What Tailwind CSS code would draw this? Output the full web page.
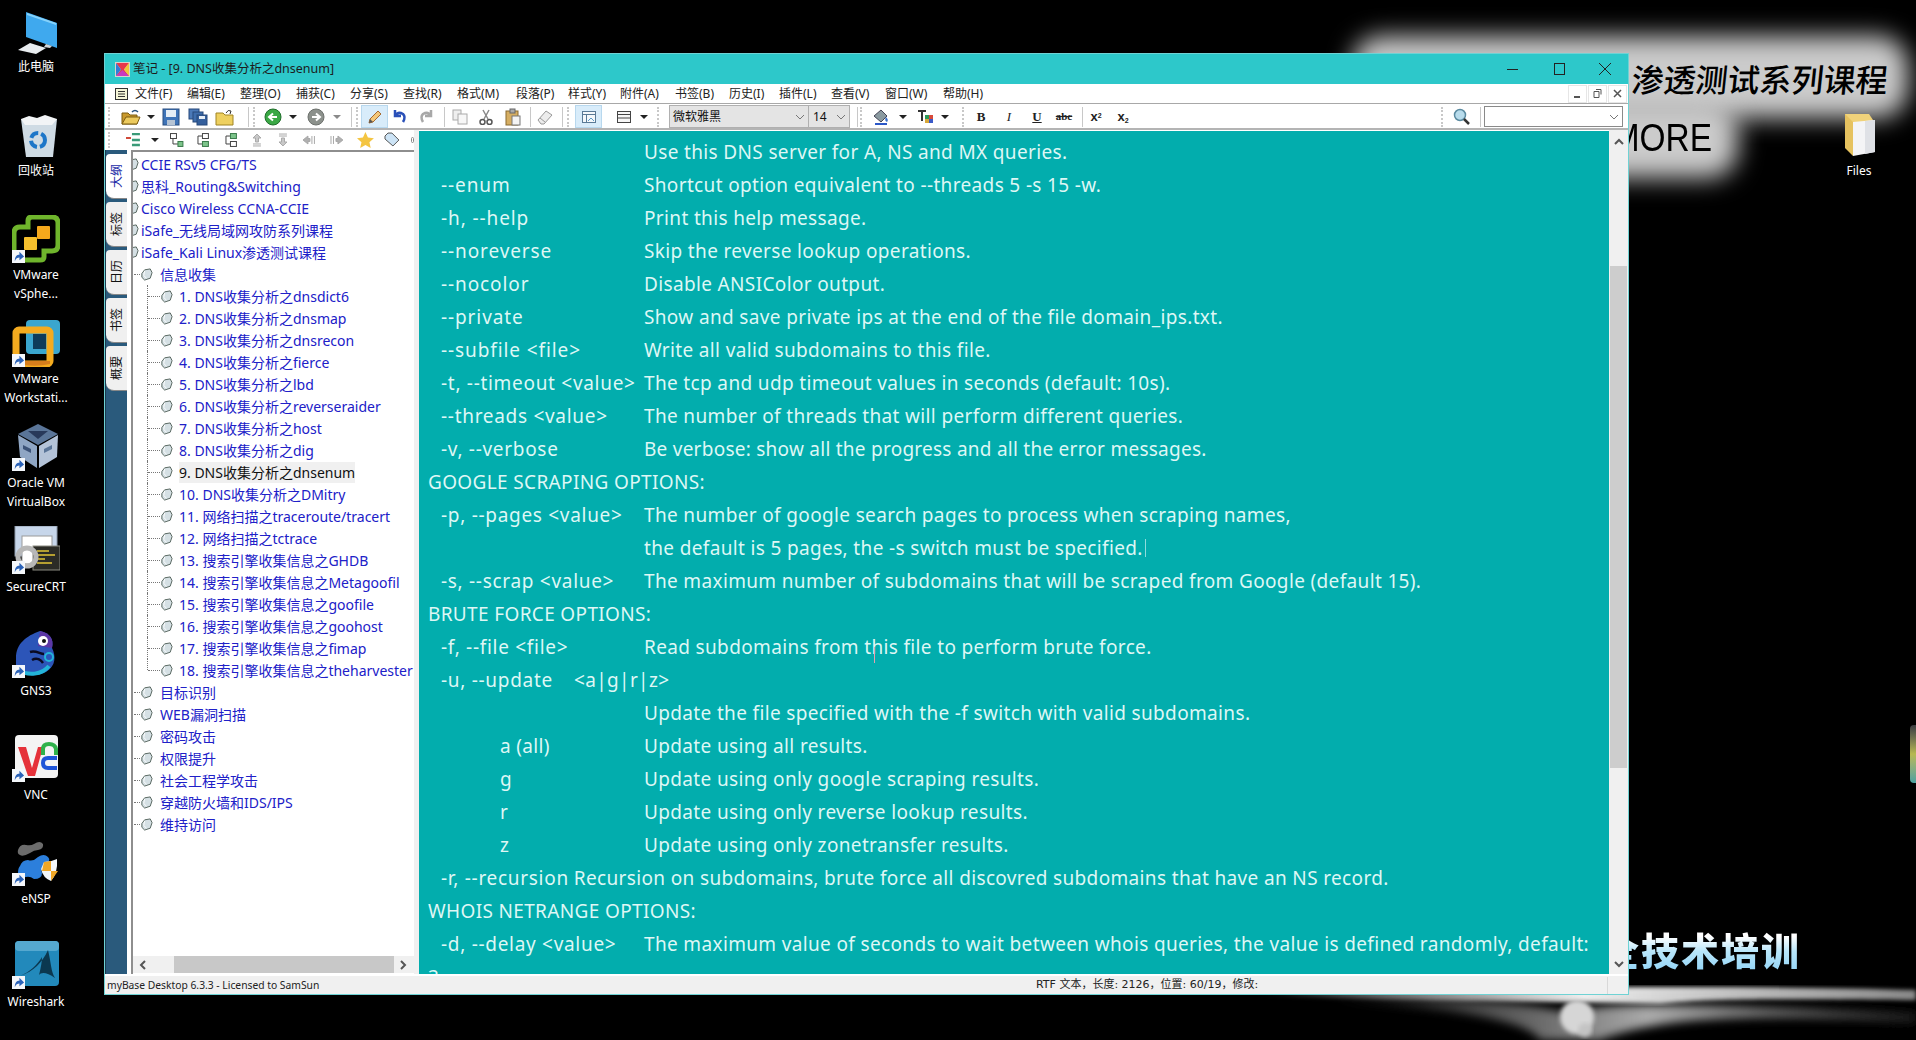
<!DOCTYPE html>
<html lang="zh-CN">
<head>
<meta charset="UTF-8">
<title>笔记 - [9. DNS收集分析之dnsenum]</title>
<script src="https://cdn.jsdelivr.net/npm/@tailwindcss/browser@4"></script>
</head>
<body class="bg-black overflow-hidden font-['Noto_Sans','Noto_Sans_CJK_SC',sans-serif]">
<svg class="hidden">
  <symbol id="node" viewBox="0 0 14 14"><path d="M2 6 5 2l6-1 2 4-2 6-6 2-3-3Z" fill="#d5e0e4" stroke="#4f5f58"/><path d="M5 3 4 8l3 3" fill="none" stroke="#fff"/></symbol>
  <symbol id="sc" viewBox="0 0 14 14"><rect width="14" height="14" fill="#f4f7fb"/><path d="M3 12c0-5 2-7 5-7V2l5 5-5 4V8c-2 0-4 1-5 4Z" fill="#2a62b8"/></symbol>
  <symbol id="caret" viewBox="0 0 8 8"><path d="M0 2h8L4 6Z" fill="#222"/></symbol>
  <symbol id="caretg" viewBox="0 0 8 8"><path d="M0 2h8L4 6Z" fill="#8a8a8a"/></symbol>
  <symbol id="chev" viewBox="0 0 10 10"><path d="m1 3 4 4 4-4" fill="none" stroke="#777"/></symbol>
</svg>

<!-- desktop background -->
<div class="absolute left-[1352px] top-[36px] w-[556px] h-[82px] bg-[#cbcbcb] rounded-[30px] blur-[12px]"></div>
<div class="absolute left-[1560px] top-[100px] w-[178px] h-[78px] bg-[#cbcbcb] rounded-[30px] blur-[12px]"></div>
<div class="absolute right-[28px] top-[56px] flex gap-[1px] text-[32px] leading-[44px] text-black font-['Noto_Sans_CJK_SC',sans-serif] font-medium -skew-x-6">渗透测试系列课程</div>
<div class="absolute left-[1598px] top-[112px] text-[38px] leading-[52px] text-black font-['Liberation_Sans',sans-serif] origin-right scale-x-[.88]">MORE</div>
<div class="absolute left-[1601px] top-[924px] text-[38px] leading-[50px] font-black whitespace-nowrap font-['Noto_Sans_CJK_SC',sans-serif] tracking-[2px] bg-linear-to-b from-white from-25% via-[#b8e6fa] via-55% to-[#8ed2f6] bg-clip-text text-transparent">全技术培训</div>
<svg class="absolute left-[1100px] top-[970px]" width="816" height="70" viewBox="0 0 816 70">
  <defs>
    <filter id="b6"><feGaussianBlur stdDeviation="5"/></filter>
    <filter id="b2"><feGaussianBlur stdDeviation="2"/></filter>
    <linearGradient id="st" x1="0" x2="1"><stop offset="0" stop-color="#fff" stop-opacity="0"/><stop offset=".5" stop-color="#eee"/><stop offset=".75" stop-color="#bbb"/><stop offset="1" stop-color="#888"/></linearGradient>
    <linearGradient id="sw" x1="0" x2="1"><stop offset="0" stop-color="#888" stop-opacity="0"/><stop offset=".55" stop-color="#aaa"/><stop offset="1" stop-color="#222"/></linearGradient>
  </defs>
  <path d="M150 24C320 18 620 14 816 20v10C620 28 600 30 560 34 420 30 300 32 150 24Z" fill="url(#st)" filter="url(#b2)"/>
  <path d="M220 30C340 26 430 32 470 44 500 30 600 34 816 44v8C660 44 560 46 500 70H440C430 50 340 36 220 30Z" fill="url(#sw)" filter="url(#b6)"/>
  <circle cx="477" cy="47" r="17" fill="#d6d6d6" filter="url(#b2)"/>
  <circle cx="485" cy="60" r="7" fill="#c4c4c4" filter="url(#b2)"/>
</svg>
<div class="absolute left-[1910px] top-[725px] w-[6px] h-[58px] rounded-l-sm bg-linear-to-b from-[#3a3c40] via-[#b8b850] to-[#4aa0a0]"></div>

<!-- desktop icons -->
<div class="absolute left-0 top-[8px] w-[72px] flex flex-col text-white text-[12px] leading-[19px] text-center">
  <div class="h-[103.7px]">
    <svg class="mx-auto" width="48" height="48" viewBox="0 0 48 48"><path d="M14 4 45 15v25L14 29Z" fill="#3fa9ee"/><path d="m15 5 29 10v2L15 7Z" fill="#86d2fa"/><path d="M34 36l6 2-2 2-6-1Z" fill="#cfd4d8"/><path d="M6 42 18 35l16 5-10 6Z" fill="#e8ecef"/></svg>
    <div class="mt-[1px]">此电脑</div>
  </div>
  <div class="h-[103.7px]">
    <svg class="mx-auto" width="48" height="48" viewBox="0 0 48 48"><path d="M9 7h36l-4 38H14Z" fill="#cfdbe4"/><path d="M9 7l8-3 8 2 8-3 12 4-5 6H13Z" fill="#f2f4f6"/><circle cx="26" cy="28" r="7" fill="none" stroke="#1d76c8" stroke-width="4" stroke-dasharray="9 3"/></svg>
    <div class="mt-[1px]">回收站</div>
  </div>
  <div class="h-[103.7px]">
    <div class="relative w-[48px] h-[48px] mx-auto">
      <svg width="48" height="48" viewBox="0 0 48 48"><path d="M16 12V6q0-4 4-4h20q6 0 6 6v22q0 6-6 6h-8v6q0 3-4 3H8q-6 0-6-6V18q0-6 6-6Z" fill="none" stroke="#6fb52c" stroke-width="5"/><rect x="25" y="11" width="13" height="13" rx="1" fill="#f5a81c"/><rect x="12" y="22" width="13" height="13" rx="1" fill="#f7c02d"/></svg>
      <svg class="absolute left-0 bottom-0" width="13" height="13"><use href="#sc"/></svg>
    </div>
    <div class="mt-[2px]">VMware<br>vSphe...</div>
  </div>
  <div class="h-[103.7px]">
    <div class="relative w-[48px] h-[48px] mx-auto">
      <svg width="48" height="48" viewBox="0 0 48 48"><rect x="14" y="1" width="34" height="34" rx="4" fill="#3aa6cf"/><rect x="4" y="11" width="34" height="34" rx="3" fill="none" stroke="#f4ab1f" stroke-width="7"/><rect x="21" y="15" width="13" height="15" fill="#0d3c5a"/><path d="M8 42h30v3q-12 3-26 1Z" fill="#d67e1c"/></svg>
      <svg class="absolute left-0 bottom-0" width="13" height="13"><use href="#sc"/></svg>
    </div>
    <div class="mt-[2px]">VMware<br>Workstati...</div>
  </div>
  <div class="h-[103.7px]">
    <div class="relative w-[48px] h-[48px] mx-auto">
      <svg width="48" height="48" viewBox="0 0 48 48"><path d="M26 1 46 11 26 22 6 11Z" fill="#5a7598"/><path d="M6 12 25 23v22L8 34Z" fill="#8fa6c4"/><path d="m46 12-19 11v22l18-11Z" fill="#b4c3d8"/><path d="M16 8h20l-10 8Z" fill="#28395a"/><path d="M11 22l8 4v4l-8-4Z" fill="#3c5378"/><path d="m32 26 8-4v4l-8 4Z" fill="#5a7598"/></svg>
      <svg class="absolute left-0 bottom-0" width="13" height="13"><use href="#sc"/></svg>
    </div>
    <div class="mt-[2px]">Oracle VM<br>VirtualBox</div>
  </div>
  <div class="h-[103.7px]">
    <div class="relative w-[48px] h-[48px] mx-auto">
      <svg width="48" height="48" viewBox="0 0 48 48"><rect x="3" y="0" width="42" height="30" fill="#c7d6ea" stroke="#8d99aa"/><rect x="10" y="10" width="30" height="28" fill="#fff" stroke="#999"/><rect x="21" y="20" width="27" height="24" fill="#2b2b26" stroke="#8a8a80"/><path d="M25 25h12M25 29h18M25 33h8M25 37h15" stroke="#e4c636" stroke-width="1.5"/><circle cx="15" cy="31" r="9" fill="none" stroke="#b7b7b7" stroke-width="5"/></svg>
      <svg class="absolute left-0 bottom-0" width="13" height="13"><use href="#sc"/></svg>
    </div>
    <div class="mt-[3px]">SecureCRT</div>
  </div>
  <div class="h-[103.7px]">
    <div class="relative w-[48px] h-[48px] mx-auto">
      <svg width="48" height="48" viewBox="0 0 48 48"><path d="M4 28C4 14 14 6 28 1c10 2 14 8 12 17 4 8 4 18-6 24-10 5-22 4-30-3Z" fill="#2c55b8"/><path d="M28 1c10 2 14 8 12 17l-14-2Z" fill="#5d37a5"/><circle cx="31" cy="11" r="5" fill="#fff"/><circle cx="32" cy="11" r="2" fill="#111"/><path d="M6 40c10 6 24 5 31-4" stroke="#23b4d8" stroke-width="4" fill="none"/><path d="M18 22c6-2 10 2 14 2M20 30c5-3 9 0 11 3" stroke="#0a0a22" stroke-width="2.5" fill="none"/><circle cx="37" cy="27" r="4" fill="none" stroke="#23b4d8" stroke-width="2"/></svg>
      <svg class="absolute left-0 bottom-0" width="13" height="13"><use href="#sc"/></svg>
    </div>
    <div class="mt-[3px]">GNS3</div>
  </div>
  <div class="h-[103.7px]">
    <div class="relative w-[48px] h-[48px] mx-auto">
      <svg width="48" height="48" viewBox="0 0 48 48"><rect x="3" y="1" width="43" height="43" rx="4" fill="#f4f4f4"/><path d="M6 13h8l6 21 6-21h5L23 42h-7Z" fill="#e5323a"/><path d="M31 21v-6q0-5 6-5t7 5v6" fill="none" stroke="#2fb14a" stroke-width="4"/><path d="M45 24H36q-5 0-5 5t5 5h9" fill="none" stroke="#1f55d8" stroke-width="4"/></svg>
      <svg class="absolute left-0 bottom-0" width="13" height="13"><use href="#sc"/></svg>
    </div>
    <div class="mt-[3px]">VNC</div>
  </div>
  <div class="h-[103.7px]">
    <div class="relative w-[48px] h-[48px] mx-auto">
      <svg width="48" height="48" viewBox="0 0 48 48"><path d="M6 12q2-6 8-5 5 1 8-1 6-4 9 0 1 5-5 6-4 0-8 3-7 4-10 2-3-1-2-5Z" fill="#6c6c6c"/><path d="M8 28q2-6 8-6 5 2 10-3 6-4 10 0t-4 8q-4 4-2 8 0 6-8 6-4-3-8-2-8 1-8-4t2-7Z" fill="#2c7fdc"/><path d="M32 24q7 0 13-3 1 14-6 22-8-3-10-12Z" fill="#f2f6fa"/><path d="M32 24l7-1v10h-9Zm7 9h7l-7 10Z" fill="#f0a727"/></svg>
      <svg class="absolute left-0 bottom-0" width="13" height="13"><use href="#sc"/></svg>
    </div>
    <div class="mt-[3px]">eNSP</div>
  </div>
  <div class="h-[103.7px]">
    <div class="relative w-[48px] h-[48px] mx-auto">
      <svg width="48" height="48" viewBox="0 0 48 48"><rect x="3" y="0" width="44" height="45" rx="4" fill="#2289bb"/><rect x="3" y="0" width="44" height="10" rx="4" fill="#55a8cf"/><path d="M8 35C22 30 30 22 36 9c3 12 3 22 7 28-8-6-14-6-16-3 2-8 3-14 3-18-5 8-12 15-22 19Z" fill="#0b3850"/></svg>
      <svg class="absolute left-0 bottom-0" width="13" height="13"><use href="#sc"/></svg>
    </div>
    <div class="mt-[3px]">Wireshark</div>
  </div>
</div>
<div class="absolute left-[1827px] top-[112px] w-[64px] text-white text-[12px] leading-[19px] text-center">
  <svg class="mx-auto" width="40" height="48" viewBox="0 0 40 48"><path d="M6 2h24l4 6v32L6 36Z" fill="#f0d27a"/><path d="M6 2v34l8 8V10Z" fill="#e6c25f"/><path d="M14 10l22-2v32l-22 4Z" fill="#f4f4f6"/><path d="M26 9l10-1v32l-10 2Z" fill="#dfe1e6"/></svg>
  <div class="mt-[1px]">Files</div>
</div>

<!-- main window -->
<div class="absolute left-[104px] top-[53px] w-[1525px] h-[942px] flex flex-col bg-[#f0f0f0] border border-[#6fd2d4]">
  <div class="h-[30px] shrink-0 bg-[#2dc8ca] flex items-center text-[12.5px] text-[#1c1c1c]">
    <svg class="ml-[10px]" width="15" height="15" viewBox="0 0 15 15"><rect width="15" height="15" fill="#d8d4cc"/><path d="M1 1h13L9 7.500 14 14H1l5-6.500Z" fill="#e8384a"/><path d="M1 1 6 7.500 1 14Z" fill="#2f7fd8"/><path d="M14 1 9 7.500 14 14Z" fill="#f0c838"/><path d="M1 14h13L7.500 8Z" fill="#c83ac0"/></svg>
    <span class="ml-[3px]">笔记 - [9. DNS收集分析之dnsenum]</span>
    <div class="ml-auto flex items-center">
      <svg class="w-[46px]" width="46" height="12" viewBox="0 0 46 12"><path d="M17 6.500h11" stroke="#222"/></svg>
      <svg class="w-[46px]" width="46" height="12" viewBox="0 0 46 12"><rect x="18.500" y=".5" width="10" height="11" fill="none" stroke="#222"/></svg>
      <svg class="w-[46px]" width="46" height="12" viewBox="0 0 46 12"><path d="m17 0 12 12M29 0 17 12" stroke="#222"/></svg>
    </div>
  </div>

  <div class="h-[20px] shrink-0 bg-white flex items-center text-[12px] text-[#222] border-b border-[#a8a8a8]">
    <svg class="ml-[10px] mr-[7px]" width="13" height="12" viewBox="0 0 13 12"><rect x=".5" y=".5" width="12" height="11" fill="#f6f6d8" stroke="#333"/><path d="M3 3.500h7M3 6h7M3 8.500h7" stroke="#333"/></svg>
    <span class="w-[52px]">文件(F)</span>
    <span class="w-[53px]">编辑(E)</span>
    <span class="w-[56px]">整理(O)</span>
    <span class="w-[54px]">捕获(C)</span>
    <span class="w-[53px]">分享(S)</span>
    <span class="w-[54px]">查找(R)</span>
    <span class="w-[59px]">格式(M)</span>
    <span class="w-[52px]">段落(P)</span>
    <span class="w-[52px]">样式(Y)</span>
    <span class="w-[55px]">附件(A)</span>
    <span class="w-[54px]">书签(B)</span>
    <span class="w-[50px]">历史(I)</span>
    <span class="w-[52px]">插件(L)</span>
    <span class="w-[54px]">查看(V)</span>
    <span class="w-[58px]">窗口(W)</span>
    <span>帮助(H)</span>
    <div class="ml-auto mr-[1px] flex gap-[1px] h-[18px]">
      <span class="w-[19px] border border-[#e6e6e6] flex items-center justify-center"><svg width="9" height="9"><path d="M1 8h6" stroke="#555" stroke-width="2"/></svg></span>
      <span class="w-[19px] border border-[#e6e6e6] flex items-center justify-center"><svg width="9" height="9"><path d="M3 .5h5v5M1 2.500h5v6H1Z" fill="none" stroke="#555"/></svg></span>
      <span class="w-[19px] border border-[#e6e6e6] flex items-center justify-center"><svg width="9" height="9"><path d="m1 1 7 7M8 1 1 8" stroke="#555" stroke-width="1.500"/></svg></span>
    </div>
  </div>

  <!-- toolbar -->
  <div class="h-[26px] shrink-0 bg-white flex items-center pt-[1px] border-b-2 border-[#b4b4b4]">
    <span class="ml-[3px] h-[20px] border-l-2 border-dotted border-[#c8c8c8]"></span>
    <svg class="ml-[11px]" width="20" height="18" viewBox="0 0 20 18"><path d="M1 5h6l2 2h7v9H1Z" fill="#c9992c" stroke="#7d5c10"/><path d="M1 16 5 9h14l-3 7Z" fill="#ecca5e" stroke="#7d5c10"/><path d="M11 4q3-3 6 0" stroke="#27507c" fill="none" stroke-width="1.500"/></svg>
    <svg class="ml-[6px]" width="8" height="8"><use href="#caret"/></svg>
    <svg class="ml-[7px]" width="18" height="18" viewBox="0 0 18 18"><rect x="1" y="1" width="16" height="16" fill="#3f74b8" stroke="#2b4e80"/><rect x="4" y="2" width="10" height="7" fill="#e6eef6"/><rect x="5" y="12" width="8" height="5" fill="#b6c4d4"/></svg>
    <svg class="ml-[8px]" width="20" height="18" viewBox="0 0 20 18"><rect x="1" y="1" width="10" height="10" fill="#4a79b8" stroke="#26497a"/><rect x="5" y="4" width="10" height="10" fill="#3f6ead" stroke="#26497a"/><rect x="9" y="7" width="10" height="10" fill="#345f9c" stroke="#26497a"/><rect x="11" y="8" width="6" height="3" fill="#e6eef6"/></svg>
    <svg class="ml-[7px]" width="20" height="18" viewBox="0 0 20 18"><path d="M1 5h7l2 2h8v10H1Z" fill="#eed05f" stroke="#a08424"/><path d="M11 5q2-4 5-2l-1 3" stroke="#333" fill="none"/></svg>
    <span class="ml-[13px] h-[20px] border-l border-[#c8c8c8]"></span>
    <span class="ml-[4px] h-[20px] border-l-2 border-dotted border-[#c8c8c8]"></span>
    <svg class="ml-[9px]" width="18" height="18" viewBox="0 0 18 18"><circle cx="9" cy="9" r="8" fill="#3aa845" stroke="#1f6e2a"/><path d="M13 9H6m3-3.500L5 9l4 3.500" stroke="#fff" stroke-width="2" fill="none"/></svg>
    <svg class="ml-[7px]" width="8" height="8"><use href="#caret"/></svg>
    <svg class="ml-[10px]" width="18" height="18" viewBox="0 0 18 18"><circle cx="9" cy="9" r="8" fill="#8c918c" stroke="#6c706c"/><path d="M5 9h7M9 5.500 13 9l-4 3.500" stroke="#fff" stroke-width="2" fill="none"/></svg>
    <svg class="ml-[8px]" width="8" height="8"><use href="#caretg"/></svg>
    <span class="ml-[10px] h-[20px] border-l border-[#c8c8c8]"></span>
    <span class="ml-[4px] h-[20px] border-l-2 border-dotted border-[#c8c8c8]"></span>
    <span class="ml-[3px] w-[27px] h-[23px] bg-[#d8ecfa] border border-[#b8d8ee] flex items-center justify-center"><svg width="16" height="16" viewBox="0 0 16 16"><path d="M2 14l1-4L11 2l3 3-8 8Z" fill="#f4c87a" stroke="#a86a30"/><path d="M2 14l1-4 3 3Z" fill="#555"/></svg></span>
    <svg class="ml-[3px]" width="17" height="17" viewBox="0 0 17 17"><path d="M4 2v6h6M4 8q3-5 8-2 3 3 0 8" fill="none" stroke="#2a50b8" stroke-width="2.500"/></svg>
    <svg class="ml-[10px]" width="17" height="17" viewBox="0 0 17 17"><path d="M13 2v6H7m6 0q-3-5-8-2-3 3 0 8" fill="none" stroke="#a8a8a8" stroke-width="2.500"/></svg>
    <span class="ml-[9px] h-[20px] border-l border-[#c8c8c8]"></span>
    <svg class="ml-[7px]" width="16" height="16" viewBox="0 0 16 16"><rect x="1" y="1" width="8" height="10" fill="#eee" stroke="#aaa"/><rect x="6" y="5" width="9" height="10" fill="#f7f7f7" stroke="#aaa"/></svg>
    <svg class="ml-[10px]" width="16" height="16" viewBox="0 0 16 16"><path d="M5 1l5 9M11 1 6 10" stroke="#888" stroke-width="1.500"/><circle cx="4.500" cy="13" r="2.500" fill="none" stroke="#555" stroke-width="1.500"/><circle cx="11.500" cy="13" r="2.500" fill="none" stroke="#555" stroke-width="1.500"/></svg>
    <svg class="ml-[11px]" width="16" height="18" viewBox="0 0 16 18"><rect x="1" y="3" width="12" height="14" fill="#d6ae62" stroke="#8a6a30"/><rect x="5" y="1" width="5" height="4" fill="#aaa" stroke="#666"/><rect x="7" y="8" width="8" height="9" fill="#f4f4f4" stroke="#777"/></svg>
    <span class="ml-[9px] h-[20px] border-l border-[#c8c8c8]"></span>
    <svg class="ml-[6px]" width="16" height="16" viewBox="0 0 16 16"><path d="M1 11 9 2l6 4-8 9H4Z" fill="#ececec" stroke="#999"/><path d="M3 9l5 4" stroke="#999"/></svg>
    <span class="ml-[9px] h-[20px] border-l border-[#c8c8c8]"></span>
    <span class="ml-[4px] h-[20px] border-l-2 border-dotted border-[#c8c8c8]"></span>
    <span class="ml-[6px] w-[27px] h-[23px] bg-[#d8ecfa] border border-[#b8d8ee] flex items-center justify-center"><svg width="16" height="16" viewBox="0 0 16 16"><rect x="1.500" y="2.500" width="13" height="11" fill="#f4f8fb" stroke="#5a7a96"/><path d="M1.500 5.500h13M5.500 5.500v8" stroke="#5a7a96"/><path d="M7 12l3-3 3 3" stroke="#5a9ac8" fill="none"/></svg></span>
    <svg class="ml-[14px]" width="16" height="16" viewBox="0 0 16 16"><rect x="1.500" y="2.500" width="13" height="11" fill="#f6f6f6" stroke="#444"/><path d="M1.500 5.500h13M1.500 9h13" stroke="#444"/></svg>
    <svg class="ml-[8px]" width="8" height="8"><use href="#caret"/></svg>
    <span class="ml-[9px] h-[20px] border-l-2 border-dotted border-[#c8c8c8]"></span>
    <div class="ml-[10px] w-[140px] h-[23px] bg-[#e4e4e4] border border-[#b0b0b0] flex items-center pl-[3px] text-[12px] text-[#111]">微软雅黑<svg class="ml-auto mr-[3px]" width="10" height="10"><use href="#chev"/></svg></div>
    <div class="w-[41px] h-[23px] bg-[#e4e4e4] border border-l-0 border-[#b0b0b0] flex items-center pl-[4px] text-[12px] text-[#111]">14<svg class="ml-auto mr-[3px]" width="10" height="10"><use href="#chev"/></svg></div>
    <span class="ml-[7px] h-[20px] border-l border-[#c8c8c8]"></span>
    <span class="ml-[2px] h-[20px] border-l-2 border-dotted border-[#c8c8c8]"></span>
    <svg class="ml-[10px]" width="20" height="18" viewBox="0 0 20 18"><path d="M2 8 9 2l6 6-6 6Z" fill="#8a9aa0" stroke="#445"/><path d="M14 9q3 3 1 5-3-1-1-5Z" fill="#3a70c8"/><path d="M3 16h12" stroke="#2b58c8" stroke-width="2"/></svg>
    <svg class="ml-[7px]" width="8" height="8"><use href="#caret"/></svg>
    <svg class="ml-[10px]" width="18" height="18" viewBox="0 0 18 18"><path d="M1 2h8v2H6v9H4V4H1Z" fill="#333"/><rect x="8" y="7" width="4" height="4" fill="#2a9a5a"/><rect x="12" y="7" width="4" height="4" fill="#d84a3a"/><rect x="8" y="11" width="4" height="4" fill="#d8a83a"/><rect x="12" y="11" width="4" height="4" fill="#3a5ac8"/></svg>
    <svg class="ml-[6px]" width="8" height="8"><use href="#caret"/></svg>
    <span class="ml-[13px] h-[20px] border-l-2 border-dotted border-[#c8c8c8]"></span>
    <div class="ml-[7px] w-[20px] text-center text-[13px] leading-none font-bold font-['Liberation_Serif',serif] text-[#222]">B</div>
    <div class="ml-[8px] w-[20px] text-center text-[13px] leading-none italic font-['Liberation_Serif',serif] text-[#222]">I</div>
    <div class="ml-[8px] w-[20px] text-center text-[13px] leading-none font-bold underline font-['Liberation_Serif',serif] text-[#222]">U</div>
    <div class="ml-[7px] w-[20px] text-center text-[11px] leading-none line-through font-bold font-['Liberation_Serif',serif] text-[#222]">abc</div>
    <span class="ml-[8px] h-[20px] border-l border-[#c8c8c8]"></span>
    <div class="ml-[3px] w-[20px] text-center text-[13px] leading-none font-bold font-['Liberation_Sans',sans-serif] text-[#222]">x<sup class="text-[7px]">2</sup></div>
    <div class="ml-[7px] w-[20px] text-center text-[13px] leading-none font-bold font-['Liberation_Sans',sans-serif] text-[#222]">x<sub class="text-[7px]">2</sub></div>
    <span class="ml-auto h-[20px] border-l-2 border-dotted border-[#c8c8c8]"></span>
    <svg class="ml-[10px]" width="18" height="18" viewBox="0 0 18 18"><circle cx="7" cy="7" r="5.500" fill="#b8dcec" stroke="#5a8aa0" stroke-width="1.500"/><path d="m11 11 5 5" stroke="#333" stroke-width="2.500"/></svg>
    <span class="ml-[9px] h-[20px] border-l border-[#c8c8c8]"></span>
    <div class="ml-[3px] mr-[5px] w-[139px] h-[21px] bg-white border border-[#8a8a8a] flex items-center"><svg class="ml-auto mr-[3px]" width="10" height="10"><use href="#chev"/></svg></div>
  </div>

  <div class="flex-1 min-h-0 flex">
    <!-- left panel -->
    <div class="w-[309px] shrink-0 flex flex-col bg-[#f0f0f0]">
      <div class="h-[20px] shrink-0 bg-white flex items-center">
        <span class="ml-[3px] h-[16px] border-l-2 border-dotted border-[#c8c8c8]"></span>
        <svg class="ml-[16px]" width="16" height="14" viewBox="0 0 16 14"><path d="M0 5h5" stroke="#d04a3a" stroke-width="2"/><path d="M6 1h8M6 7h8M6 12h8" stroke="#3a9a78" stroke-width="2.500"/></svg>
        <svg class="ml-[9px]" width="8" height="8"><use href="#caret"/></svg>
        <svg class="ml-[11px]" width="14" height="14" viewBox="0 0 14 14"><rect x=".5" y=".5" width="6" height="5" fill="#fff" stroke="#444"/><path d="M3 6v5h5" fill="none" stroke="#444"/><rect x="8" y="8.500" width="5" height="5" fill="#7cc48a" stroke="#3a7a4a"/></svg>
        <svg class="ml-[11px]" width="14" height="14" viewBox="0 0 14 14"><rect x="7.500" y=".5" width="6" height="5" fill="#fff" stroke="#444"/><path d="M7 3H3v8h4" fill="none" stroke="#444"/><rect x="7.500" y="8.500" width="6" height="5" fill="#7cc48a" stroke="#3a7a4a"/></svg>
        <svg class="ml-[14px]" width="14" height="14" viewBox="0 0 14 14"><rect x="7.500" y=".5" width="6" height="5" fill="#7cc48a" stroke="#3a7a4a"/><path d="M7 3H3v8h4" fill="none" stroke="#444"/><rect x="7.500" y="8.500" width="6" height="5" fill="#fff" stroke="#444"/></svg>
        <svg class="ml-[15px]" width="10" height="14" viewBox="0 0 10 14"><path d="M5 1 9 5H6.500v4h-3V5H1ZM1 11h8M1 13h8" fill="#c8c8c8" stroke="#a8a8a8"/></svg>
        <svg class="ml-[16px]" width="10" height="14" viewBox="0 0 10 14"><path d="M5 13 9 9H6.500V5h-3v4H1ZM1 1h8M1 3h8" fill="#c8c8c8" stroke="#a8a8a8"/></svg>
        <svg class="ml-[15px]" width="14" height="10" viewBox="0 0 14 10"><path d="M1 5 6 1v2.500h2v3H6V9ZM10 1v8M12.500 1v8" fill="#b0b0b0" stroke="#a8a8a8"/></svg>
        <svg class="ml-[14px]" width="14" height="10" viewBox="0 0 14 10"><path d="M13 5 8 1v2.500H6v3h2V9ZM1 1v8M3.500 1v8" fill="#b0b0b0" stroke="#a8a8a8"/></svg>
        <svg class="ml-[13px]" width="17" height="16" viewBox="0 0 17 16"><path d="m8.500 0 2.500 5.500 6 .7-4.500 4 1.300 5.800-5.300-3-5.300 3 1.300-5.800L0 6.200l6-.7Z" fill="#f4c542"/></svg>
        <svg class="ml-[10px]" width="16" height="16" viewBox="0 0 16 16"><path d="M1 4 4 1h4l7 7-6 6-8-7Z" fill="#cde4f6" stroke="#555"/></svg>
        <span class="ml-[11px] w-[3px] h-[6px] border border-[#888] rounded-full"></span>
      </div>
      <div class="flex-1 min-h-0 flex">
        <div class="w-[22px] shrink-0 bg-[#2a5a7c] flex flex-col gap-[3px] pt-[4px] border-l border-[#1a3a50]">
          <div class="h-[45px] bg-white rounded-bl-lg rounded-tl-sm border-b border-[#888] flex items-center justify-center"><span class="-rotate-90 whitespace-nowrap text-[12px] text-[#1c2ca8]">大纲</span></div>
          <div class="h-[45px] bg-[#f0f0f0] rounded-bl-lg rounded-tl-sm border-b border-[#888] flex items-center justify-center"><span class="-rotate-90 whitespace-nowrap text-[12px] text-[#111]">标签</span></div>
          <div class="h-[45px] bg-[#f0f0f0] rounded-bl-lg rounded-tl-sm border-b border-[#888] flex items-center justify-center"><span class="-rotate-90 whitespace-nowrap text-[12px] text-[#111]">日历</span></div>
          <div class="h-[45px] bg-[#f0f0f0] rounded-bl-lg rounded-tl-sm border-b border-[#888] flex items-center justify-center"><span class="-rotate-90 whitespace-nowrap text-[12px] text-[#111]">书签</span></div>
          <div class="h-[45px] bg-[#f0f0f0] rounded-bl-lg rounded-tl-sm border-b border-[#888] flex items-center justify-center"><span class="-rotate-90 whitespace-nowrap text-[12px] text-[#111]">概要</span></div>
        </div>
        <div class="w-[4px] shrink-0 bg-white"></div>
        <div class="w-[283px] shrink-0 flex flex-col bg-white border-l-2 border-t-2 border-[#8e8e8e] overflow-hidden">
          <div class="flex-1 min-h-0 pt-[1px] text-[14px] text-[#2020c8] whitespace-nowrap">
            <div class="h-[22px] flex items-center"><svg class="-ml-[7px] mr-[2px]" width="13" height="13"><use href="#node"/></svg>CCIE RSv5 CFG/TS</div>
            <div class="h-[22px] flex items-center"><svg class="-ml-[7px] mr-[2px]" width="13" height="13"><use href="#node"/></svg>思科_Routing&amp;Switching</div>
            <div class="h-[22px] flex items-center"><svg class="-ml-[7px] mr-[2px]" width="13" height="13"><use href="#node"/></svg>Cisco Wireless CCNA-CCIE</div>
            <div class="h-[22px] flex items-center"><svg class="-ml-[7px] mr-[2px]" width="13" height="13"><use href="#node"/></svg>iSafe_无线局域网攻防系列课程</div>
            <div class="h-[22px] flex items-center"><svg class="-ml-[7px] mr-[2px]" width="13" height="13"><use href="#node"/></svg>iSafe_Kali Linux渗透测试课程</div>
            <div class="h-[22px] flex items-center"><span class="w-[6px] ml-[1px] border-t border-dotted border-[#777]"></span><svg class="mr-[7px]" width="13" height="13"><use href="#node"/></svg>信息收集</div>
            <div class="h-[22px] flex items-center pl-[14px]"><span class="self-stretch border-l border-dotted border-[#777]"></span><span class="w-[12px] border-t border-dotted border-[#777]"></span><svg class="mr-[6px]" width="13" height="13"><use href="#node"/></svg>1. DNS收集分析之dnsdict6</div>
            <div class="h-[22px] flex items-center pl-[14px]"><span class="self-stretch border-l border-dotted border-[#777]"></span><span class="w-[12px] border-t border-dotted border-[#777]"></span><svg class="mr-[6px]" width="13" height="13"><use href="#node"/></svg>2. DNS收集分析之dnsmap</div>
            <div class="h-[22px] flex items-center pl-[14px]"><span class="self-stretch border-l border-dotted border-[#777]"></span><span class="w-[12px] border-t border-dotted border-[#777]"></span><svg class="mr-[6px]" width="13" height="13"><use href="#node"/></svg>3. DNS收集分析之dnsrecon</div>
            <div class="h-[22px] flex items-center pl-[14px]"><span class="self-stretch border-l border-dotted border-[#777]"></span><span class="w-[12px] border-t border-dotted border-[#777]"></span><svg class="mr-[6px]" width="13" height="13"><use href="#node"/></svg>4. DNS收集分析之fierce</div>
            <div class="h-[22px] flex items-center pl-[14px]"><span class="self-stretch border-l border-dotted border-[#777]"></span><span class="w-[12px] border-t border-dotted border-[#777]"></span><svg class="mr-[6px]" width="13" height="13"><use href="#node"/></svg>5. DNS收集分析之lbd</div>
            <div class="h-[22px] flex items-center pl-[14px]"><span class="self-stretch border-l border-dotted border-[#777]"></span><span class="w-[12px] border-t border-dotted border-[#777]"></span><svg class="mr-[6px]" width="13" height="13"><use href="#node"/></svg>6. DNS收集分析之reverseraider</div>
            <div class="h-[22px] flex items-center pl-[14px]"><span class="self-stretch border-l border-dotted border-[#777]"></span><span class="w-[12px] border-t border-dotted border-[#777]"></span><svg class="mr-[6px]" width="13" height="13"><use href="#node"/></svg>7. DNS收集分析之host</div>
            <div class="h-[22px] flex items-center pl-[14px]"><span class="self-stretch border-l border-dotted border-[#777]"></span><span class="w-[12px] border-t border-dotted border-[#777]"></span><svg class="mr-[6px]" width="13" height="13"><use href="#node"/></svg>8. DNS收集分析之dig</div>
            <div class="h-[22px] flex items-center pl-[14px]"><span class="self-stretch border-l border-dotted border-[#777]"></span><span class="w-[12px] border-t border-dotted border-[#777]"></span><svg class="mr-[6px]" width="13" height="13"><use href="#node"/></svg><span class="text-[#111] bg-[#f0f0f0]">9. DNS收集分析之dnsenum</span></div>
            <div class="h-[22px] flex items-center pl-[14px]"><span class="self-stretch border-l border-dotted border-[#777]"></span><span class="w-[12px] border-t border-dotted border-[#777]"></span><svg class="mr-[6px]" width="13" height="13"><use href="#node"/></svg>10. DNS收集分析之DMitry</div>
            <div class="h-[22px] flex items-center pl-[14px]"><span class="self-stretch border-l border-dotted border-[#777]"></span><span class="w-[12px] border-t border-dotted border-[#777]"></span><svg class="mr-[6px]" width="13" height="13"><use href="#node"/></svg>11. 网络扫描之traceroute/tracert</div>
            <div class="h-[22px] flex items-center pl-[14px]"><span class="self-stretch border-l border-dotted border-[#777]"></span><span class="w-[12px] border-t border-dotted border-[#777]"></span><svg class="mr-[6px]" width="13" height="13"><use href="#node"/></svg>12. 网络扫描之tctrace</div>
            <div class="h-[22px] flex items-center pl-[14px]"><span class="self-stretch border-l border-dotted border-[#777]"></span><span class="w-[12px] border-t border-dotted border-[#777]"></span><svg class="mr-[6px]" width="13" height="13"><use href="#node"/></svg>13. 搜索引擎收集信息之GHDB</div>
            <div class="h-[22px] flex items-center pl-[14px]"><span class="self-stretch border-l border-dotted border-[#777]"></span><span class="w-[12px] border-t border-dotted border-[#777]"></span><svg class="mr-[6px]" width="13" height="13"><use href="#node"/></svg>14. 搜索引擎收集信息之Metagoofil</div>
            <div class="h-[22px] flex items-center pl-[14px]"><span class="self-stretch border-l border-dotted border-[#777]"></span><span class="w-[12px] border-t border-dotted border-[#777]"></span><svg class="mr-[6px]" width="13" height="13"><use href="#node"/></svg>15. 搜索引擎收集信息之goofile</div>
            <div class="h-[22px] flex items-center pl-[14px]"><span class="self-stretch border-l border-dotted border-[#777]"></span><span class="w-[12px] border-t border-dotted border-[#777]"></span><svg class="mr-[6px]" width="13" height="13"><use href="#node"/></svg>16. 搜索引擎收集信息之goohost</div>
            <div class="h-[22px] flex items-center pl-[14px]"><span class="self-stretch border-l border-dotted border-[#777]"></span><span class="w-[12px] border-t border-dotted border-[#777]"></span><svg class="mr-[6px]" width="13" height="13"><use href="#node"/></svg>17. 搜索引擎收集信息之fimap</div>
            <div class="h-[22px] flex items-center pl-[14px]"><span class="self-start h-[11px] border-l border-dotted border-[#777]"></span><span class="w-[12px] border-t border-dotted border-[#777]"></span><svg class="mr-[6px]" width="13" height="13"><use href="#node"/></svg>18. 搜索引擎收集信息之theharvester</div>
            <div class="h-[22px] flex items-center"><span class="w-[6px] ml-[1px] border-t border-dotted border-[#777]"></span><svg class="mr-[7px]" width="13" height="13"><use href="#node"/></svg>目标识别</div>
            <div class="h-[22px] flex items-center"><span class="w-[6px] ml-[1px] border-t border-dotted border-[#777]"></span><svg class="mr-[7px]" width="13" height="13"><use href="#node"/></svg>WEB漏洞扫描</div>
            <div class="h-[22px] flex items-center"><span class="w-[6px] ml-[1px] border-t border-dotted border-[#777]"></span><svg class="mr-[7px]" width="13" height="13"><use href="#node"/></svg>密码攻击</div>
            <div class="h-[22px] flex items-center"><span class="w-[6px] ml-[1px] border-t border-dotted border-[#777]"></span><svg class="mr-[7px]" width="13" height="13"><use href="#node"/></svg>权限提升</div>
            <div class="h-[22px] flex items-center"><span class="w-[6px] ml-[1px] border-t border-dotted border-[#777]"></span><svg class="mr-[7px]" width="13" height="13"><use href="#node"/></svg>社会工程学攻击</div>
            <div class="h-[22px] flex items-center"><span class="w-[6px] ml-[1px] border-t border-dotted border-[#777]"></span><svg class="mr-[7px]" width="13" height="13"><use href="#node"/></svg>穿越防火墙和IDS/IPS</div>
            <div class="h-[22px] flex items-center"><span class="w-[6px] ml-[1px] border-t border-dotted border-[#777]"></span><svg class="mr-[7px]" width="13" height="13"><use href="#node"/></svg>维持访问</div>
          </div>
          <div class="h-[17px] shrink-0 mb-[1px] bg-[#f0f0f0] flex items-center">
            <svg class="ml-[5px]" width="10" height="10" viewBox="0 0 10 10"><path d="M7 1 3 5l4 4" fill="none" stroke="#555" stroke-width="2"/></svg>
            <div class="ml-[26px] w-[220px] h-full bg-[#c8c8c8]"></div>
            <svg class="ml-[4px]" width="10" height="10" viewBox="0 0 10 10"><path d="m3 1 4 4-4 4" fill="none" stroke="#555" stroke-width="2"/></svg>
          </div>
        </div>
      </div>
    </div>
    <div class="w-[5px] shrink-0 bg-[#f0f0f0]"></div>
    <!-- note pane -->
    <div class="relative flex-1 min-w-0 bg-[#02adad] pt-[5px] overflow-hidden text-[19px] tracking-[0.35px] text-[#def7f5] whitespace-nowrap border-t border-white">
      <div class="h-[33px] flex items-center pl-[225px]">Use this DNS server for A, NS and MX queries.</div>
      <div class="h-[33px] flex items-center pl-[22px]"><span class="w-[203px] tracking-[0.9px]">--enum</span>Shortcut option equivalent to --threads 5 -s 15 -w.</div>
      <div class="h-[33px] flex items-center pl-[22px]"><span class="w-[203px] tracking-[0.9px]">-h, --help</span>Print this help message.</div>
      <div class="h-[33px] flex items-center pl-[22px]"><span class="w-[203px] tracking-[0.9px]">--noreverse</span>Skip the reverse lookup operations.</div>
      <div class="h-[33px] flex items-center pl-[22px]"><span class="w-[203px] tracking-[0.9px]">--nocolor</span>Disable ANSIColor output.</div>
      <div class="h-[33px] flex items-center pl-[22px]"><span class="w-[203px] tracking-[0.9px]">--private</span>Show and save private ips at the end of the file domain_ips.txt.</div>
      <div class="h-[33px] flex items-center pl-[22px]"><span class="w-[203px] tracking-[0.9px]">--subfile &lt;file&gt;</span>Write all valid subdomains to this file.</div>
      <div class="h-[33px] flex items-center pl-[22px]"><span class="w-[203px] tracking-[0.7px]">-t, --timeout &lt;value&gt;</span>The tcp and udp timeout values in seconds (default: 10s).</div>
      <div class="h-[33px] flex items-center pl-[22px]"><span class="w-[203px] tracking-[0.7px]">--threads &lt;value&gt;</span>The number of threads that will perform different queries.</div>
      <div class="h-[33px] flex items-center pl-[22px]"><span class="w-[203px] tracking-[0.7px]">-v, --verbose</span><span class="tracking-[0.25px]">Be verbose: show all the progress and all the error messages.</span></div>
      <div class="h-[33px] flex items-center pl-[9px]">GOOGLE SCRAPING OPTIONS:</div>
      <div class="h-[33px] flex items-center pl-[22px]"><span class="w-[203px] tracking-[0.7px]">-p, --pages &lt;value&gt;</span>The number of google search pages to process when scraping names,</div>
      <div class="h-[33px] flex items-center pl-[225px]">the default is 5 pages, the -s switch must be specified.</div>
      <div class="h-[33px] flex items-center pl-[22px]"><span class="w-[203px] tracking-[0.7px]">-s, --scrap &lt;value&gt;</span>The maximum number of subdomains that will be scraped from Google (default 15).</div>
      <div class="h-[33px] flex items-center pl-[9px]">BRUTE FORCE OPTIONS:</div>
      <div class="h-[33px] flex items-center pl-[22px]"><span class="w-[203px] tracking-[0.7px]">-f, --file &lt;file&gt;</span>Read subdomains from this file to perform brute force.</div>
      <div class="h-[33px] flex items-center pl-[22px]"><span class="w-[133px] tracking-[0.7px]">-u, --update</span>&lt;a|g|r|z&gt;</div>
      <div class="h-[33px] flex items-center pl-[225px]">Update the file specified with the -f switch with valid subdomains.</div>
      <div class="h-[33px] flex items-center pl-[81px]"><span class="w-[144px]">a (all)</span>Update using all results.</div>
      <div class="h-[33px] flex items-center pl-[81px]"><span class="w-[144px]">g</span>Update using only google scraping results.</div>
      <div class="h-[33px] flex items-center pl-[81px]"><span class="w-[144px]">r</span>Update using only reverse lookup results.</div>
      <div class="h-[33px] flex items-center pl-[81px]"><span class="w-[144px]">z</span>Update using only zonetransfer results.</div>
      <div class="h-[33px] flex items-center pl-[22px]"><span class="tracking-[0.7px] mr-[5px]">-r, --recursion</span>Recursion on subdomains, brute force all discovred subdomains that have an NS record.</div>
      <div class="h-[33px] flex items-center pl-[9px]">WHOIS NETRANGE OPTIONS:</div>
      <div class="h-[33px] flex items-center pl-[22px]"><span class="w-[203px] tracking-[0.7px]">-d, --delay &lt;value&gt;</span>The maximum value of seconds to wait between whois queries, the value is defined randomly, default:</div>
      <div class="h-[33px] flex items-center pl-[9px]">3</div>
      <span class="absolute left-[726px] top-[408px] w-[1px] h-[18px] bg-[#8fdcdc]"></span>
      <span class="absolute left-[455px] top-[516px] w-[1px] h-[16px] bg-[#e8a0b0]"></span>
    </div>
    <div class="w-[19px] shrink-0 bg-[#f0f0f0] flex flex-col">
      <svg class="mx-auto mt-[8px]" width="10" height="8" viewBox="0 0 10 8"><path d="m1 6 4-4 4 4" fill="none" stroke="#555" stroke-width="2"/></svg>
      <div class="mt-[120px] h-[502px] bg-[#cdcdcd] mx-[1px]"></div>
      <svg class="mx-auto mt-auto mb-[6px]" width="10" height="8" viewBox="0 0 10 8"><path d="m1 2 4 4 4-4" fill="none" stroke="#555" stroke-width="2"/></svg>
    </div>
  </div>

  <div class="h-[20px] shrink-0 bg-[#f0f0f0] border-t-2 border-white flex items-center pt-[1px] text-[#222]">
    <span class="ml-[2px] w-[929px] text-[10.3px]">myBase Desktop 6.3.3 - Licensed to SamSun</span>
    <span class="text-[11px] font-['DejaVu_Sans','Noto_Sans_CJK_SC',sans-serif]">RTF 文本，长度: 2126，位置: 60/19，修改:</span>
    <span class="ml-auto mr-[20px] h-full border-l border-[#d8d8d8]"></span>
  </div>
</div>
</body>
</html>
